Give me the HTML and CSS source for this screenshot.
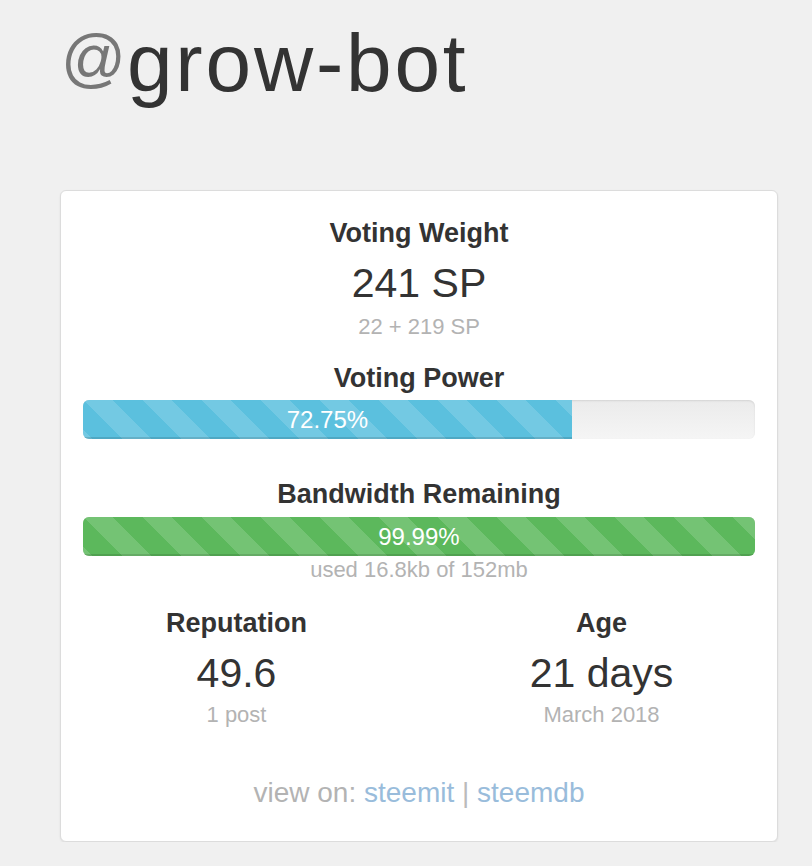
FILE: index.html
```html
<!DOCTYPE html>
<html>
<head>
<meta charset="utf-8">
<link rel="stylesheet" href="styles.css">
</head>
<body>
<div class="page">
  <h1 class="title"><span class="at">@</span><span class="name">grow-bot</span></h1>
  <div class="card">
    <div class="label">Voting Weight</div>
    <div class="big big-vw">241 SP</div>
    <div class="sub sub-vw">22 + 219 SP</div>

    <div class="label label-vp">Voting Power</div>
    <div class="progress progress-vp">
      <div class="bar bar-info" style="width: 72.75%">72.75%</div>
    </div>

    <div class="label label-bw">Bandwidth Remaining</div>
    <div class="progress progress-bw">
      <div class="bar bar-success" style="width: 99.99%">99.99%</div>
    </div>
    <div class="sub sub-bw">used 16.8kb of 152mb</div>

    <div class="stats">
      <div class="stat">
        <div class="label">Reputation</div>
        <div class="big big-stat">49.6</div>
        <div class="sub sub-stat">1 post</div>
      </div>
      <div class="stat">
        <div class="label">Age</div>
        <div class="big big-stat">21 days</div>
        <div class="sub sub-stat">March 2018</div>
      </div>
    </div>

    <div class="footer">view on: <a href="#">steemit</a> <span class="sep">|</span> <a href="#">steemdb</a></div>
  </div>
</div>
</body>
</html>
```

FILE: styles.css
```css
html, body {
  margin: 0;
  padding: 0;
  background: #f0f0f0;
}

body {
  font-family: "Liberation Sans", Arial, Helvetica, sans-serif;
  color: #333;
}

.page {
  padding: 22px 0 0 60px;
  width: 718px;
}

.title {
  margin: 0 0 86px 0;
  height: 82px;
  font-size: 82px;
  line-height: 82px;
  font-weight: normal;
  color: #333;
}

.title .at {
  color: #777;
  font-size: 64px;
  line-height: 0;
  vertical-align: 11px;
  margin-left: 1px;
  margin-right: 1px;
}

.title .name {
  letter-spacing: 2.8px;
}

.card {
  background: #fff;
  border: 1px solid #dcdcdc;
  border-radius: 6px;
  box-shadow: 0 1px 2px rgba(0, 0, 0, 0.08);
  padding: 29px 22px 34px 22px;
  text-align: center;
}

.label {
  font-size: 27px;
  line-height: 27px;
  font-weight: bold;
  color: #333;
}

.big {
  font-size: 41px;
  line-height: 41px;
  color: #333;
}

.sub {
  font-size: 22px;
  line-height: 22px;
  color: #b3b3b3;
}

.big-vw { margin-top: 16px; }
.sub-vw { margin-top: 12px; }
.label-vp { margin-top: 27px; }
.progress-vp { margin-top: 8px; }
.label-bw { margin-top: 42px; }
.progress-bw { margin-top: 9px; }
.sub-bw { margin-top: 3px; }

.progress {
  height: 39px;
  border-radius: 6px;
  background: linear-gradient(to bottom, #ebebeb 0, #f5f5f5 100%);
  box-shadow: inset 0 1px 2px rgba(0, 0, 0, 0.1);
  overflow: hidden;
  display: flex;
}

.bar {
  height: 39px;
  line-height: 39px;
  font-size: 24px;
  color: #fff;
  text-align: center;
  box-shadow: inset 0 -2px 0 rgba(0, 0, 0, 0.12);
  background-image: linear-gradient(45deg,
    rgba(255, 255, 255, 0.15) 25%, transparent 25%,
    transparent 50%, rgba(255, 255, 255, 0.15) 50%,
    rgba(255, 255, 255, 0.15) 75%, transparent 75%, transparent);
  background-size: 59px 59px;
}

.bar-info {
  background-color: #5bc0de;
}

.bar-success {
  background-color: #5cb85c;
}

.stats {
  display: grid;
  grid-template-columns: 365px 365px;
  justify-content: center;
  margin: 29px -30px 0 -30px;
}

.big-stat { margin-top: 16px; }
.sub-stat { margin-top: 10px; }

.footer {
  margin-top: 53px;
  font-size: 28px;
  line-height: 28px;
  color: #b3b3b3;
}

.footer a {
  color: #99bcdb;
  text-decoration: none;
}

.footer .sep {
  color: #bbb;
}
```
